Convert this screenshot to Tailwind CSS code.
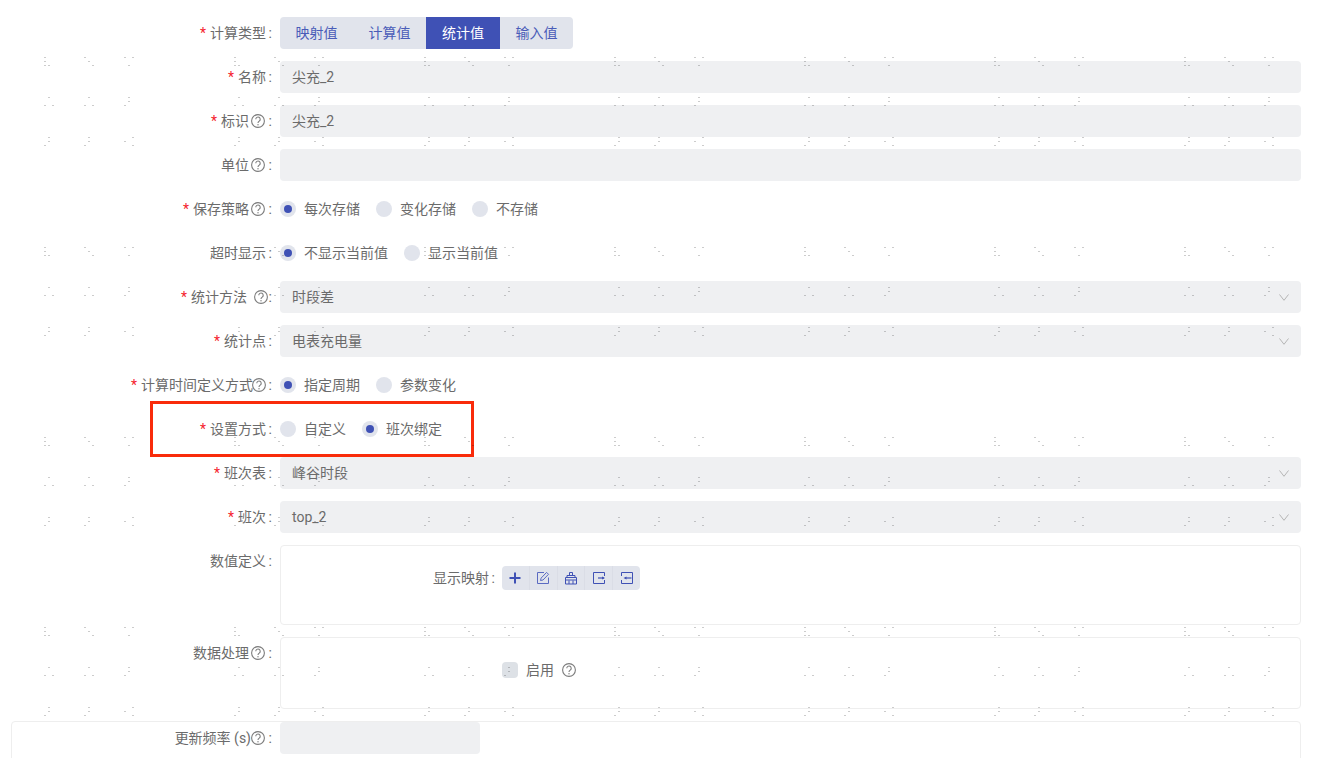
<!DOCTYPE html>
<html lang="zh">
<head>
<meta charset="utf-8">
<title>统计值</title>
<script src="https://cdn.jsdelivr.net/npm/@tailwindcss/browser@4"></script>
</head>
<body class="bg-white overflow-hidden font-['Roboto','Noto_Sans_CJK_SC',sans-serif] text-sm text-[#6b6b6b]">
<svg width="0" height="0" class="absolute">
  <defs>
    <symbol id="help" viewBox="0 0 14 14"><circle cx="7" cy="7" r="6.4" fill="none" stroke="#7c7c7c" stroke-width="1.1"/><path d="M4.800 5.300a2.200 2.200 0 1 1 3.400 1.800c-.8.5-1.200.9-1.200 1.800" fill="none" stroke="#7c7c7c" stroke-width="1.1"/><circle cx="7" cy="10.700" r=".7" fill="#7c7c7c"/></symbol>
    <symbol id="chev" viewBox="0 0 10 7"><path d="M.5.5 5 6.300 9.500.5" fill="none" stroke="#b5b5b5" stroke-width="1"/></symbol>
  </defs>
</svg>
<div class="relative w-[1318px] h-[758px] overflow-hidden">
  <div class="w-[1301px] pt-[17px] flex flex-col gap-3">

    <div class="flex h-8 items-center">
      <div class="w-[272px] flex justify-end items-center"><span class="text-[#f5222d] mr-[4px]">*</span><span>计算类型</span><span class="w-[6px] text-right">:</span></div>
      <div class="ml-2 flex h-8 rounded overflow-hidden bg-[#e1e4ec] text-[#4a5cb8]">
        <span class="w-[73px] flex items-center justify-center">映射值</span>
        <span class="w-[73px] flex items-center justify-center">计算值</span>
        <span class="w-[74px] flex items-center justify-center bg-[#3f51b5] text-white">统计值</span>
        <span class="w-[73px] flex items-center justify-center">输入值</span>
      </div>
    </div>

    <div class="flex h-8 items-center">
      <div class="w-[272px] flex justify-end items-center"><span class="text-[#f5222d] mr-[4px]">*</span><span>名称</span><span class="w-[6px] text-right">:</span></div>
      <div class="ml-2 flex-1 h-8 rounded bg-[#eff0f2] px-3 flex items-center">尖充_2</div>
    </div>

    <div class="flex h-8 items-center">
      <div class="w-[272px] flex justify-end items-center"><span class="text-[#f5222d] mr-[4px]">*</span><span>标识</span><svg class="w-[14px] h-[14px] ml-[2px]"><use href="#help"/></svg><span class="w-[7px] text-right">:</span></div>
      <div class="ml-2 flex-1 h-8 rounded bg-[#eff0f2] px-3 flex items-center">尖充_2</div>
    </div>

    <div class="flex h-8 items-center">
      <div class="w-[272px] flex justify-end items-center"><span>单位</span><svg class="w-[14px] h-[14px] ml-[2px]"><use href="#help"/></svg><span class="w-[7px] text-right">:</span></div>
      <div class="ml-2 flex-1 h-8 rounded bg-[#eff0f2]"></div>
    </div>

    <div class="flex h-8 items-center">
      <div class="w-[272px] flex justify-end items-center"><span class="text-[#f5222d] mr-[4px]">*</span><span>保存策略</span><svg class="w-[14px] h-[14px] ml-[2px]"><use href="#help"/></svg><span class="w-[7px] text-right">:</span></div>
      <div class="ml-2 flex items-center gap-4">
        <span class="flex items-center gap-2"><span class="w-4 h-4 rounded-full bg-[#e1e4ec] flex items-center justify-center"><span class="w-2 h-2 rounded-full bg-[#3f51b5]"></span></span>每次存储</span>
        <span class="flex items-center gap-2"><span class="w-4 h-4 rounded-full bg-[#e1e4ec]"></span>变化存储</span>
        <span class="flex items-center gap-2"><span class="w-4 h-4 rounded-full bg-[#e1e4ec]"></span>不存储</span>
      </div>
    </div>

    <div class="flex h-8 items-center">
      <div class="w-[272px] flex justify-end items-center"><span>超时显示</span><span class="w-[6px] text-right">:</span></div>
      <div class="ml-2 flex items-center gap-4">
        <span class="flex items-center gap-2"><span class="w-4 h-4 rounded-full bg-[#e1e4ec] flex items-center justify-center"><span class="w-2 h-2 rounded-full bg-[#3f51b5]"></span></span>不显示当前值</span>
        <span class="flex items-center gap-2"><span class="w-4 h-4 rounded-full bg-[#e1e4ec]"></span>显示当前值</span>
      </div>
    </div>

    <div class="flex h-8 items-center">
      <div class="w-[272px] flex justify-end items-center"><span class="text-[#f5222d] mr-[4px]">*</span><span>统计方法</span><svg class="w-[14px] h-[14px] ml-[7px]"><use href="#help"/></svg><span class="w-[4px] text-right">:</span></div>
      <div class="ml-2 flex-1 h-8 rounded bg-[#eff0f2] px-3 flex items-center justify-between">时段差<svg class="w-[10px] h-[7px]"><use href="#chev"/></svg></div>
    </div>

    <div class="flex h-8 items-center">
      <div class="w-[272px] flex justify-end items-center"><span class="text-[#f5222d] mr-[4px]">*</span><span>统计点</span><span class="w-[6px] text-right">:</span></div>
      <div class="ml-2 flex-1 h-8 rounded bg-[#eff0f2] px-3 flex items-center justify-between">电表充电量<svg class="w-[10px] h-[7px]"><use href="#chev"/></svg></div>
    </div>

    <div class="flex h-8 items-center">
      <div class="w-[272px] flex justify-end items-center"><span class="text-[#f5222d] mr-[4px]">*</span><span class="mr-[-1px]">计算时间定义方式</span><svg class="w-[14px] h-[14px]"><use href="#help"/></svg><span class="w-[6px] text-right">:</span></div>
      <div class="ml-2 flex items-center gap-4">
        <span class="flex items-center gap-2"><span class="w-4 h-4 rounded-full bg-[#e1e4ec] flex items-center justify-center"><span class="w-2 h-2 rounded-full bg-[#3f51b5]"></span></span>指定周期</span>
        <span class="flex items-center gap-2"><span class="w-4 h-4 rounded-full bg-[#e1e4ec]"></span>参数变化</span>
      </div>
    </div>

    <div class="flex h-8 items-center">
      <div class="w-[272px] flex justify-end items-center"><span class="text-[#f5222d] mr-[4px]">*</span><span>设置方式</span><span class="w-[6px] text-right">:</span></div>
      <div class="ml-2 flex items-center gap-4">
        <span class="flex items-center gap-2"><span class="w-4 h-4 rounded-full bg-[#e1e4ec]"></span>自定义</span>
        <span class="flex items-center gap-2"><span class="w-4 h-4 rounded-full bg-[#e1e4ec] flex items-center justify-center"><span class="w-2 h-2 rounded-full bg-[#3f51b5]"></span></span>班次绑定</span>
      </div>
    </div>

    <div class="flex h-8 items-center">
      <div class="w-[272px] flex justify-end items-center"><span class="text-[#f5222d] mr-[4px]">*</span><span>班次表</span><span class="w-[6px] text-right">:</span></div>
      <div class="ml-2 flex-1 h-8 rounded bg-[#eff0f2] px-3 flex items-center justify-between">峰谷时段<svg class="w-[10px] h-[7px]"><use href="#chev"/></svg></div>
    </div>

    <div class="flex h-8 items-center">
      <div class="w-[272px] flex justify-end items-center"><span class="text-[#f5222d] mr-[4px]">*</span><span>班次</span><span class="w-[6px] text-right">:</span></div>
      <div class="ml-2 flex-1 h-8 rounded bg-[#eff0f2] px-3 flex items-center justify-between">top_2<svg class="w-[10px] h-[7px]"><use href="#chev"/></svg></div>
    </div>

    <div class="flex items-start">
      <div class="w-[272px] h-8 flex justify-end items-center"><span>数值定义</span><span class="w-[6px] text-right">:</span></div>
      <div class="ml-2 flex-1 h-20 rounded border border-[#eeeeee] pt-5 flex items-start">
        <div class="w-[214px] h-6 flex justify-end items-center"><span>显示映射</span><span class="w-[6px] text-right">:</span></div>
        <div class="ml-[7px] h-6 w-[138px] flex rounded bg-[#e1e4ec]">
          <span class="flex-1 flex items-center justify-center border-r border-[#dadde6]"><svg width="12" height="12" viewBox="0 0 12 12"><path d="M6 .5v11M.5 6h11" stroke="#3f51b5" stroke-width="2" fill="none"/></svg></span>
          <span class="flex-1 flex items-center justify-center border-r border-[#dadde6]"><svg width="14" height="14" viewBox="0 0 14 14" fill="none" stroke="#5b6bc2" stroke-width="1"><path d="M8 1.500H1.500v11h11V6.500"/><path d="M4.500 9.500l.6-2.400L10.600 1.400l1.900 1.900L7 9z"/></svg></span>
          <span class="flex-1 flex items-center justify-center border-r border-[#dadde6]"><svg class="ml-px" width="14" height="14" viewBox="0 0 14 14" fill="none" stroke="#3f51b5" stroke-width="1"><path d="M5.500 4V1.500h3V4"/><path d="M3 6.500V4.500h8v2"/><path d="M1.500 6.500h11v6.500h-11z"/><path d="M1.500 9h11M5 9.500V13M9 9.500V13"/></svg></span>
          <span class="flex-1 flex items-center justify-center border-r border-[#dadde6]"><svg width="14" height="14" viewBox="0 0 14 14" fill="none" stroke="#3f51b5" stroke-width="1"><path d="M12.500 5V1.500h-11v11h11V9"/><path d="M6 7h6" stroke-width="1.200"/><path d="M10 5.400 13 7l-3 1.600z" fill="#3f51b5" stroke="none"/></svg></span>
          <span class="flex-1 flex items-center justify-center"><svg width="14" height="14" viewBox="0 0 14 14" fill="none" stroke="#3f51b5" stroke-width="1"><path d="M1.500 5V1.500h11v11h-11V9"/><path d="M5 7h6.500" stroke-width="1.200"/><path d="M6.500 5.400 3.500 7l3 1.600z" fill="#3f51b5" stroke="none"/></svg></span>
        </div>
      </div>
    </div>

    <div class="flex items-start">
      <div class="w-[272px] h-8 flex justify-end items-center"><span>数据处理</span><svg class="w-[14px] h-[14px] ml-[2px]"><use href="#help"/></svg><span class="w-[7px] text-right">:</span></div>
      <div class="ml-2 flex-1 h-[72px] rounded border border-[#eeeeee] pl-[221px] pt-6">
        <div class="h-4 flex items-center">
          <span class="w-4 h-4 rounded-sm bg-[#dde1e6]"></span>
          <span class="ml-2">启用</span>
          <svg class="w-[14px] h-[14px] ml-2"><use href="#help"/></svg>
        </div>
      </div>
    </div>

    <div class="ml-[11px] h-[100px] rounded border border-[#eeeeee] flex items-start">
      <div class="w-[260px] h-8 flex justify-end items-center"><span>更新频率 (s)</span><svg class="w-[14px] h-[14px]"><use href="#help"/></svg><span class="w-[7px] text-right">:</span></div>
      <div class="ml-2 w-[200px] h-8 rounded bg-[#eff0f2]"></div>
    </div>
  </div>

  <div class="absolute left-[150px] top-[401px] w-[324px] h-[56px] border-[3px] border-[#f92b0a] pointer-events-none"></div>

  <svg class="absolute left-0 top-0 w-[1318px] h-[758px] pointer-events-none" shape-rendering="crispEdges">
    <defs>
      <pattern id="wm" patternUnits="userSpaceOnUse" width="190" height="190">
        <g fill="#000" fill-opacity=".2">
          <rect x="44" y="57" width="2" height="1"/><rect x="44" y="61" width="2" height="1"/><rect x="44" y="65" width="2" height="1"/><rect x="48" y="65" width="2" height="1"/>
          <rect x="84" y="57" width="2" height="1"/><rect x="88" y="61" width="2" height="1"/><rect x="92" y="65" width="2" height="1"/>
          <rect x="124" y="57" width="2" height="1"/><rect x="132" y="57" width="2" height="1"/><rect x="128" y="65" width="2" height="1"/>
          <rect x="48" y="97" width="2" height="1"/><rect x="44" y="105" width="2" height="1"/><rect x="52" y="105" width="2" height="1"/>
          <rect x="88" y="97" width="2" height="1"/><rect x="84" y="105" width="2" height="1"/><rect x="92" y="105" width="2" height="1"/>
          <rect x="128" y="97" width="2" height="1"/><rect x="128" y="101" width="2" height="1"/><rect x="124" y="105" width="2" height="1"/>
          <rect x="48" y="137" width="2" height="1"/><rect x="48" y="141" width="2" height="1"/><rect x="44" y="145" width="2" height="1"/>
          <rect x="88" y="137" width="2" height="1"/><rect x="88" y="141" width="2" height="1"/><rect x="84" y="145" width="2" height="1"/>
          <rect x="132" y="137" width="2" height="1"/><rect x="124" y="141" width="2" height="1"/><rect x="132" y="145" width="2" height="1"/>
        </g>
      </pattern>
    </defs>
    <rect width="1318" height="758" fill="url(#wm)"/>
  </svg>
</div>
</body>
</html>
